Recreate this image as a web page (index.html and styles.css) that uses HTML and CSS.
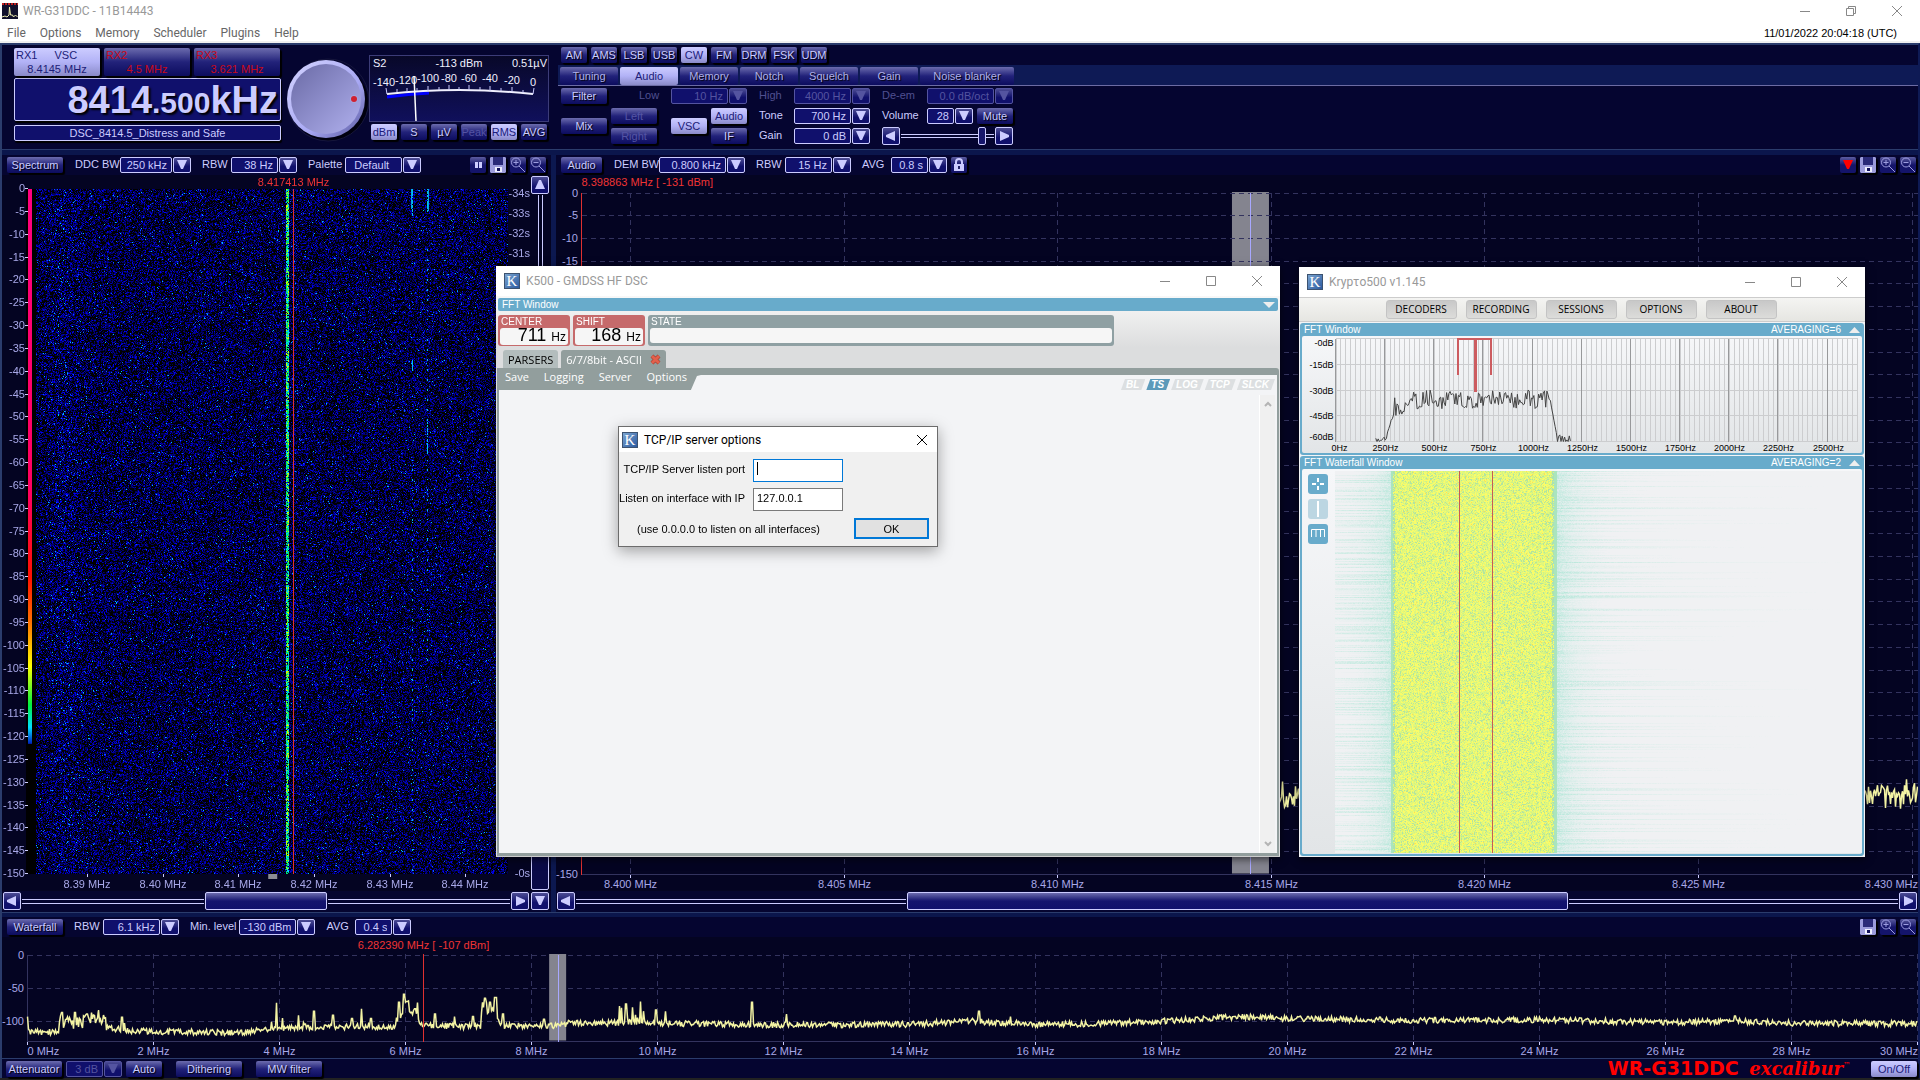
FILE: index.html
```html
<!DOCTYPE html>
<html lang="en">
<head>
  <meta charset="UTF-8">
  <title>WR-G31DDC - 11B14443</title>
  <meta name="viewport" content="width=device-width, initial-scale=1.0">
  <link rel="stylesheet" href="styles.css">
</head>
<body>

<!-- icons -->
<svg class="sprite" aria-hidden="true">
  <symbol id="i-down" viewBox="0 0 10 10"><path d="M0 0h10L6 9H4z"/></symbol>
  <symbol id="i-up" viewBox="0 0 10 10"><path d="M4 0h2l4 9H0z"/></symbol>
  <symbol id="i-left" viewBox="0 0 10 10"><path d="M9 0v10L0 6V4z"/></symbol>
  <symbol id="i-right" viewBox="0 0 10 10"><path d="M1 0v10l9-4V4z"/></symbol>
  <symbol id="i-pause" viewBox="0 0 16 16"><path d="M5 5h3v6H5zM9 5h3v6H9z"/></symbol>
  <symbol id="i-save" viewBox="0 0 16 16"><path d="M0 1l1-1h14l1 1v14l-1 1H1l-1-1z" fill="#9c9cdc"/><path d="M3 0h10v8H3z" fill="#2a2a78"/><path d="M5 10h7v5H5z" fill="#eeeeff"/><path d="M7 11h3v3H7z" fill="#10105a"/></symbol>
  <symbol id="i-zoomin" viewBox="0 0 16 16"><g fill="none" stroke="#9c9ce0"><circle cx="6" cy="5.500" r="4.500"/><path d="M9 9l6 6M3.500 5.500h5M6 3v5"/></g></symbol>
  <symbol id="i-zoomout" viewBox="0 0 16 16"><g fill="none" stroke="#9c9ce0"><circle cx="6" cy="5.500" r="4.500"/><path d="M9 9l6 6M3.500 5.500h5"/></g></symbol>
  <symbol id="i-lock" viewBox="0 0 16 16"><path d="M5 7V5q0-3 3-3t3 3v2" fill="none" stroke="#ccf" stroke-width="2"/><path d="M3 7h10v7H3z" fill="#ccf"/><path d="M7 9h2v3H7z" fill="#226"/></symbol>
  <symbol id="i-min" viewBox="0 0 10 10"><path d="M0 5.500h10"/></symbol>
  <symbol id="i-max" viewBox="0 0 10 10"><path d="M.5.5h9v9h-9z"/></symbol>
  <symbol id="i-restore" viewBox="0 0 10 10"><path d="M.5 2.500h7v7h-7zM2.500 2.500v-2h7v7h-2"/></symbol>
  <symbol id="i-close" viewBox="0 0 10 10"><path d="M0 0l10 10M10 0L0 10"/></symbol>
</svg>

<div class="app">
  <header class="titlebar">
    <svg class="app-icon" width="16" height="16" viewBox="0 0 16 16"><path d="M0 0h16v16H0z" fill="#10102c"/><path d="M0 1h16" stroke="#c02020" stroke-width="2" stroke-dasharray="2 1"/><path d="M0 14l3-1 2 1 2-2 .5-8 1 8 2 0 1 2 2-2 2 2" fill="none" stroke="#f0f0b0"/></svg>
    <span class="title">WR-G31DDC - 11B14443</span>
    <div class="win-buttons">
      <button aria-label="Minimize"><svg width="10" height="10"><use href="#i-min"/></svg></button>
      <button aria-label="Restore"><svg width="10" height="10"><use href="#i-restore"/></svg></button>
      <button aria-label="Close"><svg width="10" height="10"><use href="#i-close"/></svg></button>
    </div>
  </header>
  <nav class="menubar">
    <a href="#">File</a><a href="#">Options</a><a href="#">Memory</a><a href="#">Scheduler</a><a href="#">Plugins</a><a href="#">Help</a>
    <span class="clock">11/01/2022 20:04:18 (UTC)</span>
  </nav>

  <main class="radio">
    <section class="top">
      <div class="tuner">
        <div class="rx-tabs">
          <button class="rx on"><span>RX1 <i>VSC</i></span><b>8.4145 MHz</b></button>
          <button class="rx"><span>RX2</span><b>4.5 MHz</b></button>
          <button class="rx"><span>RX3</span><b>3.621 MHz</b></button>
        </div>
        <div class="freq">8414<small>.500</small>kHz</div>
        <div class="station">DSC_8414.5_Distress and Safe</div>
      </div>
      <svg class="knob" width="82" height="84" viewBox="0 0 82 84">
        <defs>
          <linearGradient id="kf" x1="0" y1="0" x2="1" y2="1"><stop offset="0" stop-color="#6a6aa6"/><stop offset="1" stop-color="#b0b0ee"/></linearGradient>
          <linearGradient id="kr" x1="0" y1="0" x2="1" y2="1"><stop offset="0" stop-color="#d4d4ff"/><stop offset=".6" stop-color="#a8a8f4"/><stop offset="1" stop-color="#54549a"/></linearGradient>
        </defs>
        <circle cx="42" cy="44" r="39" fill="#00000f"/>
        <circle cx="41" cy="42" r="41" fill="none" stroke="#16163c"/>
        <circle cx="39" cy="41" r="39" fill="url(#kr)"/>
        <circle cx="39" cy="41" r="35" fill="url(#kf)"/>
        <circle cx="67" cy="41" r="4" fill="#a4a4dc"/>
        <circle cx="67" cy="41" r="3" fill="#d02030"/>
      </svg>
      <div class="meter">
        <svg width="180" height="67" viewBox="0 0 180 67">
          <g class="m-text">
            <text x="4" y="12">S2</text><text x="90" y="12" text-anchor="middle">-113 dBm</text><text x="178" y="12" text-anchor="end">0.51µV</text>
            <g text-anchor="middle"><text x="15" y="31">-140</text><text x="37" y="29">-120</text><text x="59" y="27">-100</text><text x="80" y="27">-80</text><text x="100" y="27">-60</text><text x="121" y="27">-40</text><text x="143" y="29">-20</text><text x="164" y="31">0</text></g>
          </g>
          <path d="M18 42Q40 39 60 38" stroke="#0000ff" stroke-width="3" fill="none"/>
          <path d="M18 39Q90 31 164 39" stroke="#f0f0ff" stroke-width="2" fill="none"/>
          <path d="M18 39l-1-6M38 37v-4M59 36v-5M80 35v-5M100 35v-5M121 36v-5M143 37v-5M164 39l1-6M28 37v-3M48 36v-3M70 35v-3M90 35v-3M111 35v-3M132 36v-3M154 38v-3" stroke="#ccf"/>
          <path d="M45 21l2 45" stroke="#fff" stroke-width="1.500"/>
        </svg>
        <div class="meter-buttons">
          <button class="btn on">dBm</button><button class="btn">S</button><button class="btn">µV</button><button class="btn off">Peak</button><button class="btn on">RMS</button><button class="btn">AVG</button>
        </div>
      </div>
      <div class="demod">
        <div class="modes">
          <button class="btn">AM</button><button class="btn">AMS</button><button class="btn">LSB</button><button class="btn">USB</button><button class="btn on">CW</button><button class="btn">FM</button><button class="btn">DRM</button><button class="btn">FSK</button><button class="btn">UDM</button>
        </div>
        <div class="tabs">
          <button class="tab">Tuning</button><button class="tab on">Audio</button><button class="tab">Memory</button><button class="tab">Notch</button><button class="tab">Squelch</button><button class="tab">Gain</button><button class="tab wide">Noise blanker</button>
        </div>
        <div class="controls">
          <div class="stack s46">
            <button class="btn">Filter</button>
            <button class="btn low">Mix</button>
          </div>
          <div class="stack s46">
            <span class="blank"></span>
            <button class="btn off">Left</button>
            <button class="btn off">Right</button>
          </div>
          <div class="low-group">
            <div class="ctl off"><label for="low">Low</label><span class="combo w57"><select id="low" disabled><option>10 Hz</option></select><span class="arrow"><svg width="10" height="10"><use href="#i-down"/></svg></span></span></div>
            <div class="src">
              <button class="btn on vsc">VSC</button>
              <div class="stack s36"><button class="btn on">Audio</button><button class="btn">IF</button></div>
            </div>
          </div>
          <div class="stack c-high">
            <div class="ctl off"><label for="high">High</label><span class="combo w57"><select id="high" disabled><option>4000 Hz</option></select><span class="arrow"><svg width="10" height="10"><use href="#i-down"/></svg></span></span></div>
            <div class="ctl"><label for="tone">Tone</label><span class="combo w57"><select id="tone"><option>700 Hz</option></select><span class="arrow"><svg width="10" height="10"><use href="#i-down"/></svg></span></span></div>
            <div class="ctl"><label for="gain">Gain</label><span class="combo w57"><select id="gain"><option>0 dB</option></select><span class="arrow"><svg width="10" height="10"><use href="#i-down"/></svg></span></span></div>
          </div>
          <div class="stack c-vol">
            <div class="ctl off"><label for="deem">De-em</label><span class="combo w67"><select id="deem" disabled><option>0.0 dB/oct</option></select><span class="arrow"><svg width="10" height="10"><use href="#i-down"/></svg></span></span></div>
            <div class="ctl"><label for="vol">Volume</label><span class="combo w27"><select id="vol"><option>28</option></select><span class="arrow"><svg width="10" height="10"><use href="#i-down"/></svg></span></span><button class="btn mute">Mute</button></div>
            <div class="slider">
              <button class="sq" aria-label="Volume down"><svg width="10" height="10"><use href="#i-left"/></svg></button>
              <input type="range" min="0" max="31" value="28" aria-label="Volume">
              <button class="sq" aria-label="Volume up"><svg width="10" height="10"><use href="#i-right"/></svg></button>
            </div>
          </div>
        </div>
      </div>
    </section>

    <section class="middle">
      <div class="panel spectrum">
        <div class="toolbar">
          <button class="btn b56">Spectrum</button>
          <label for="ddc" class="l42">DDC BW</label><span class="combo w52"><select id="ddc"><option>250 kHz</option></select><span class="arrow"><svg width="10" height="10"><use href="#i-down"/></svg></span></span>
          <label for="rbw1">RBW</label><span class="combo w47"><select id="rbw1"><option>38 Hz</option></select><span class="arrow"><svg width="10" height="10"><use href="#i-down"/></svg></span></span>
          <label for="pal">Palette</label><span class="combo w57 mid"><select id="pal"><option>Default</option></select><span class="arrow"><svg width="10" height="10"><use href="#i-down"/></svg></span></span>
          <div class="tools">
            <button class="icon" aria-label="Pause"><svg width="16" height="16"><use href="#i-pause"/></svg></button>
            <button class="icon" aria-label="Save"><svg width="16" height="16"><use href="#i-save"/></svg></button>
            <button class="icon" aria-label="Zoom in"><svg width="16" height="16"><use href="#i-zoomin"/></svg></button>
            <button class="icon" aria-label="Zoom out"><svg width="16" height="16"><use href="#i-zoomout"/></svg></button>
          </div>
        </div>
        <div class="spec-body">
          <div class="plot" id="spectrum"><canvas></canvas><svg></svg></div>
          <div class="vscroll">
            <button class="sq" aria-label="Scroll up"><svg width="10" height="10"><use href="#i-up"/></svg></button>
            <span class="vtrack"></span><span class="vthumb"></span>
          </div>
        </div>
        <div class="hscroll">
          <button class="sq" aria-label="Scroll left"><svg width="10" height="10"><use href="#i-left"/></svg></button>
          <span class="track"></span><span class="thumb small"></span><span class="track"></span>
          <button class="sq" aria-label="Scroll right"><svg width="10" height="10"><use href="#i-right"/></svg></button>
          <button class="sq" aria-label="Scroll down"><svg width="10" height="10"><use href="#i-down"/></svg></button>
        </div>
      </div>
      <div class="panel audio">
        <div class="toolbar">
          <button class="btn b41">Audio</button>
          <label for="dem" class="l42">DEM BW</label><span class="combo w67"><select id="dem"><option>0.800 kHz</option></select><span class="arrow"><svg width="10" height="10"><use href="#i-down"/></svg></span></span>
          <label for="rbw2">RBW</label><span class="combo w47"><select id="rbw2"><option>15 Hz</option></select><span class="arrow"><svg width="10" height="10"><use href="#i-down"/></svg></span></span>
          <label for="avg2">AVG</label><span class="combo w37"><select id="avg2"><option>0.8 s</option></select><span class="arrow"><svg width="10" height="10"><use href="#i-down"/></svg></span></span>
          <button class="icon lock" aria-label="Lock"><svg width="16" height="16"><use href="#i-lock"/></svg></button>
          <div class="tools">
            <button class="icon red" aria-label="Marker"><svg width="10" height="10"><use href="#i-down"/></svg></button>
            <button class="icon" aria-label="Save"><svg width="16" height="16"><use href="#i-save"/></svg></button>
            <button class="icon" aria-label="Zoom in"><svg width="16" height="16"><use href="#i-zoomin"/></svg></button>
            <button class="icon" aria-label="Zoom out"><svg width="16" height="16"><use href="#i-zoomout"/></svg></button>
          </div>
        </div>
        <div class="plot" id="audio"><svg></svg></div>
        <div class="hscroll">
          <button class="sq" aria-label="Scroll left"><svg width="10" height="10"><use href="#i-left"/></svg></button>
          <span class="track"></span><span class="thumb big"></span><span class="track"></span>
          <button class="sq" aria-label="Scroll right"><svg width="10" height="10"><use href="#i-right"/></svg></button>
        </div>
      </div>
    </section>

    <section class="panel wide-band">
      <div class="toolbar">
        <button class="btn b56">Waterfall</button>
        <label for="rbw3">RBW</label><span class="combo w57"><select id="rbw3"><option>6.1 kHz</option></select><span class="arrow"><svg width="10" height="10"><use href="#i-down"/></svg></span></span>
        <label for="minl">Min. level</label><span class="combo w57"><select id="minl"><option>-130 dBm</option></select><span class="arrow"><svg width="10" height="10"><use href="#i-down"/></svg></span></span>
        <label for="avg3">AVG</label><span class="combo w37"><select id="avg3"><option>0.4 s</option></select><span class="arrow"><svg width="10" height="10"><use href="#i-down"/></svg></span></span>
        <div class="tools">
          <button class="icon" aria-label="Save"><svg width="16" height="16"><use href="#i-save"/></svg></button>
          <button class="icon" aria-label="Zoom in"><svg width="16" height="16"><use href="#i-zoomin"/></svg></button>
          <button class="icon" aria-label="Zoom out"><svg width="16" height="16"><use href="#i-zoomout"/></svg></button>
        </div>
      </div>
      <div class="plot" id="band"><svg></svg></div>
    </section>

    <footer class="bottom">
      <button class="btn b56">Attenuator</button>
      <span class="combo w37 off"><select aria-label="Attenuator" disabled><option>3 dB</option></select><span class="arrow"><svg width="10" height="10"><use href="#i-down"/></svg></span></span>
      <button class="btn b36">Auto</button>
      <button class="btn b66">Dithering</button>
      <button class="btn b66">MW filter</button>
      <span class="brand">WR-G31DDC <em>excalibur</em><sup>™</sup></span>
      <button class="btn on b46">On/Off</button>
    </footer>
  </main>
</div>

<!-- decoder window -->
<section class="window k500">
  <header class="win-title">
    <span class="k-icon">K</span><span>K500 - GMDSS HF DSC</span>
    <div class="win-buttons">
      <button aria-label="Minimize"><svg width="10" height="10"><use href="#i-min"/></svg></button>
      <button aria-label="Maximize"><svg width="10" height="10"><use href="#i-max"/></svg></button>
      <button aria-label="Close"><svg width="10" height="10"><use href="#i-close"/></svg></button>
    </div>
  </header>
  <div class="blue-bar">FFT Window <svg width="12" height="6" viewBox="0 0 12 6"><path d="M0 0h12L6 6z"/></svg></div>
  <div class="fields">
    <div class="field red"><span>CENTER</span><p>711 <small>Hz</small></p></div>
    <div class="field red"><span>SHIFT</span><p>168 <small>Hz</small></p></div>
    <div class="field state"><span>STATE</span><p></p></div>
  </div>
  <div class="k-tabs">
    <button class="k-tab">PARSERS</button>
    <button class="k-tab on">6/7/8bit - ASCII <svg width="11" height="11" viewBox="0 0 11 11"><path d="M2 2l7 7M9 2L2 9" stroke="#a03a2c" stroke-width="4"/><path d="M2 2l7 7M9 2L2 9" stroke="#e2604c" stroke-width="3"/></svg></button>
  </div>
  <div class="k-frame">
    <div class="k-head">
      <nav class="k-menu"><a href="#">Save</a><a href="#">Logging</a><a href="#">Server</a><a href="#">Options</a></nav>
      <div class="flags"><span>BL</span><span class="on">TS</span><span>LOG</span><span>TCP</span><span>SLCK</span></div>
    </div>
    <div class="k-scroll">
      <svg width="8" height="6" viewBox="0 0 8 6"><path d="M1 5l3-3 3 3"/></svg>
      <svg width="8" height="6" viewBox="0 0 8 6"><path d="M1 1l3 3 3-3"/></svg>
    </div>
  </div>
</section>

<!-- main decoder control window -->
<section class="window krypto">
  <header class="win-title">
    <span class="k-icon">K</span><span>Krypτo500 v1.145</span>
    <div class="win-buttons">
      <button aria-label="Minimize"><svg width="10" height="10"><use href="#i-min"/></svg></button>
      <button aria-label="Maximize"><svg width="10" height="10"><use href="#i-max"/></svg></button>
      <button aria-label="Close"><svg width="10" height="10"><use href="#i-close"/></svg></button>
    </div>
  </header>
  <div class="kr-menu">
    <button>DECODERS</button><button>RECORDING</button><button>SESSIONS</button><button>OPTIONS</button><button>ABOUT</button>
  </div>
  <div class="kr-panel fft">
    <div class="kr-head">FFT Window <span>AVERAGING=6</span><svg width="11" height="6" viewBox="0 0 11 6"><path d="M0 6h11L5.500 0z"/></svg></div>
    <div class="kr-body" id="fft"><svg></svg></div>
  </div>
  <div class="kr-panel fall">
    <div class="kr-head">FFT Waterfall Window <span>AVERAGING=2</span><svg width="11" height="6" viewBox="0 0 11 6"><path d="M0 6h11L5.500 0z"/></svg></div>
    <div class="kr-body">
      <div class="kr-tools">
        <button aria-label="Cross cursor"><svg width="14" height="14" viewBox="0 0 14 14"><path d="M7 1v4M7 9v4M1 7h4M9 7h4" stroke-width="2"/></svg></button>
        <button class="dim" aria-label="Line cursor"><svg width="14" height="16" viewBox="0 0 14 16"><path d="M7 0v16" stroke-width="2"/></svg></button>
        <button aria-label="Comb cursor"><svg width="14" height="14" viewBox="0 0 14 14"><path d="M.5 10V2.500h13V10M5 2v8M9.500 2v8"/></svg></button>
      </div>
      <div class="kr-fall" id="fall"><canvas></canvas></div>
    </div>
  </div>
</section>

<!-- server options dialog -->
<form class="window dialog">
  <header class="win-title">
    <span class="k-icon">K</span><span>TCP/IP server options</span>
    <div class="win-buttons"><button type="button" aria-label="Close"><svg width="10" height="10"><use href="#i-close"/></svg></button></div>
  </header>
  <div class="form-row"><label for="port">TCP/IP Server listen port</label><input type="text" id="port" class="active"></div>
  <div class="form-row"><label for="ip">Listen on interface with IP</label><input type="text" id="ip" value="127.0.0.1"></div>
  <div class="form-foot"><span>(use 0.0.0.0 to listen on all interfaces)</span><button type="button">OK</button></div>
</form>

<script src="script.js"></script>
</body>
</html>
```
FILE: styles.css
```css
* {
  margin: 0;
  padding: 0;
  box-sizing: border-box;
}

body {
  font-family: "Liberation Sans", Arial, sans-serif;
  font-size: 11px;
  line-height: 14px;
  color: #ccccff;
  background: #222;
  overflow: hidden;
}

button, select, input {
  font: inherit;
  color: inherit;
  border: 0;
  background: none;
}

a {
  color: inherit;
  text-decoration: none;
}

svg { display: block; }

.sprite { display: none; }

.app {
  min-height: 100vh;
  display: flex;
  flex-direction: column;
  padding-bottom: 2px;
}

/* title + menu */
.titlebar {
  display: flex;
  align-items: center;
  height: 22px;
  padding-left: 2px;
  background: #fff;
  color: #999;
  font-family: Roboto, "Noto Sans", sans-serif;
  font-size: 12px;
}

.titlebar .title { margin-left: 5px; }

.win-buttons {
  display: flex;
  margin-left: auto;
}

.win-buttons button {
  width: 46px;
  height: 20px;
  display: flex;
  align-items: center;
  justify-content: center;
}

.win-buttons svg {
  fill: none;
  stroke: #888;
}

.menubar {
  display: flex;
  align-items: center;
  gap: 14px;
  height: 21px;
  padding: 2px 23px 0 7px;
  background: #fff;
  border-bottom: 2px solid #f0f0f0;
  color: #666;
  font-family: Roboto, "Noto Sans", sans-serif;
  font-size: 12px;
}

.clock {
  margin-left: auto;
  color: #000;
  font-family: "Liberation Sans", Arial, sans-serif;
  font-size: 11px;
}

/* receiver */
.radio {
  flex: 1;
  display: flex;
  flex-direction: column;
  background: #050530;
  border-top: 2px solid #2b3c6c;
  border-left: 2px solid #2b3c6c;
  border-right: 2px solid #0e1a55;
}

.btn, .tab, .rx {
  background: linear-gradient(#6c6cae, #22227a 50%, #0c0c5e);
  border-radius: 2px;
  box-shadow: 2px 2px 1px #000;
  text-shadow: 1px 1px 1px #000;
  white-space: nowrap;
}

.btn {
  height: 16px;
  line-height: 16px;
  text-align: center;
}

.btn.on, .tab.on, .rx.on {
  background: linear-gradient(#ccccff, #b2b2f6 50%, #8a8ac8);
  color: #1c1c78;
  text-shadow: none;
}

.btn.off {
  color: #5454a4;
  text-shadow: none;
}

.b36 { width: 36px; }
.b41 { width: 41px; }
.b46 { width: 46px; }
.b56 { width: 56px; }
.b66 { width: 66px; }

.top {
  display: flex;
  height: 110px;
  border-bottom: 5px solid #0b164c;
  box-shadow: inset 0 -1px #2b3c6c;
}

.tuner {
  width: 267px;
  margin: 3px 6px 0 12px;
}

.rx-tabs {
  display: flex;
  gap: 4px;
}

.rx {
  width: 86px;
  height: 28px;
  padding: 0 2px;
  line-height: 14px;
  color: #c80818;
  text-shadow: none;
}

.rx span, .rx b {
  display: block;
  font-weight: normal;
  text-align: left;
}

.rx b { text-align: center; }

.rx i {
  font-style: normal;
  margin-left: 14px;
}

.freq, .station {
  border: 1px solid #ccccff;
  border-radius: 2px;
  background: #10106c;
  box-shadow: 1px 2px 1px #000;
}

.freq {
  margin-top: 2px;
  height: 43px;
  padding-right: 2px;
  text-align: right;
  font-size: 38px;
  line-height: 43px;
  font-weight: bold;
  text-shadow: 2px 2px 2px #000;
}

.freq small { font-size: 30px; }

.station {
  margin-top: 4px;
  height: 16px;
  line-height: 15px;
  text-align: center;
}

.knob { margin-top: 13px; }

.meter { margin-top: 10px; }

.meter > svg {
  background: linear-gradient(#080828, #10105c);
  outline: 1px solid #3c3c78;
  outline-offset: -1px;
}

.m-text {
  font-size: 11px;
  fill: #f0f0ff;
}

.meter-buttons {
  display: flex;
  gap: 4px;
  margin: 2px 0 0 2px;
}

.meter-buttons .btn, .modes .btn { width: 26px; }

.demod {
  flex: 1;
  margin-left: 9px;
}

.modes {
  display: flex;
  gap: 4px;
  height: 20px;
  padding: 2px 0 0 3px;
}

.tabs {
  display: flex;
  gap: 2px;
  height: 21px;
  padding: 2px 0 0 2px;
  background: #0e1a55;
  border-bottom: 1px solid #6c6ca4;
}

.tab {
  width: 58px;
  height: 18px;
  line-height: 17px;
  box-shadow: none;
  color: #b0b0e8;
}

.tab.wide { width: 94px; }

.controls {
  display: flex;
  padding: 2px 0 0 3px;
}

.stack {
  display: flex;
  flex-direction: column;
  gap: 4px;
  margin-right: 4px;
}

.s46 { width: 46px; }
.s36 { width: 36px; }

.stack .low { margin-top: 10px; }

.blank { height: 16px; }

.low-group {
  width: 86px;
  margin-right: 12px;
}

.low-group .ctl { justify-content: flex-end; }

.low-group .ctl label {
  flex: none;
  width: 32px;
}

.low-group .combo { flex: none; }

.src {
  display: flex;
  justify-content: flex-end;
  gap: 4px;
  margin-top: 4px;
}

.src .stack { margin: 0; }

.vsc {
  width: 36px;
  margin-top: 10px;
}

.ctl {
  display: flex;
  height: 16px;
}

.c-high { margin-right: 12px; }

.c-high label { width: 35px; }

.c-vol label { width: 45px; }

.ctl.off label { color: #505090; }

.combo {
  display: flex;
  gap: 1px;
  height: 16px;
}

.combo select {
  flex: 1;
  min-width: 0;
  height: 16px;
  padding-right: 4px;
  border: 1px solid #ccccff;
  border-radius: 2px;
  background: #10106c;
  text-align: right;
  text-align-last: right;
  appearance: none;
  opacity: 1;
}

.combo.mid select {
  text-align: center;
  text-align-last: center;
}

.w27 { width: 46px; }
.w37 { width: 56px; }
.w47 { width: 66px; }
.w52 { width: 71px; }
.w57 { width: 76px; }
.w67 { width: 86px; }

.arrow, .sq {
  display: flex;
  align-items: center;
  justify-content: center;
  width: 18px;
  border: 1px solid #ccccff;
  border-radius: 2px;
  background: linear-gradient(#4c4c94, #10106c 60%);
  fill: #ccccff;
}

.off .combo select, .combo.off select, .off .arrow {
  border-color: #5454a0;
  color: #5454a0;
  fill: #5454a0;
}

.sq {
  flex: none;
  height: 18px;
}

.mute {
  width: 36px;
  margin-left: 4px;
}

.slider {
  display: flex;
  align-items: center;
  width: 131px;
  height: 18px;
  margin-top: -1px;
}

.slider input {
  flex: 1;
  min-width: 0;
  margin: 0 1px;
  height: 18px;
  appearance: none;
}

.slider input::-webkit-slider-runnable-track {
  height: 4px;
  border: 1px solid #ccccff;
  border-width: 1px 0;
}

.slider input::-webkit-slider-thumb {
  appearance: none;
  width: 8px;
  height: 18px;
  margin-top: -8px;
  border: 1px solid #ccccff;
  border-radius: 2px;
  background: #16166c;
}

/* plots */
.middle {
  flex: 1;
  display: flex;
  min-height: 0;
}

.panel {
  display: flex;
  flex-direction: column;
  min-width: 0;
}

.spectrum {
  flex: 0 0 554px;
  border-right: 5px solid #0c1850;
}

.audio { flex: 1; }

.toolbar {
  display: flex;
  align-items: center;
  height: 20px;
  padding: 0 2px 0 5px;
}

.toolbar label {
  min-width: 26px;
  margin: 0 3px 2px 11px;
  white-space: nowrap;
}

.toolbar .l42 {
  width: 42px;
  margin-left: 12px;
}

.tools {
  display: flex;
  gap: 4px;
  margin-left: auto;
}

.icon {
  display: flex;
  align-items: center;
  justify-content: center;
  width: 16px;
  height: 16px;
  border-radius: 2px;
  background: linear-gradient(#5c5ca0, #14146a 50%);
  box-shadow: 2px 2px 1px #000;
  fill: #ccccff;
}

.icon.red { fill: #f00; }

.lock { margin-left: 4px; }

.spectrum .tools { margin-right: 3px; }

.spec-body {
  flex: 1;
  display: flex;
  min-height: 0;
  background: #040422;
}

.plot {
  flex: 1;
  position: relative;
  min-width: 0;
  min-height: 0;
  overflow: hidden;
  background: #040422;
}

.plot canvas {
  display: block;
  margin: 14px 0 0 34px;
}

.plot svg {
  position: absolute;
  inset: 0;
  width: 100%;
  height: 100%;
}

.plot text {
  fill: #a8a8e8;
  font-size: 11px;
}

.plot text.hot { fill: #f03434; }

.grid {
  stroke: #33335e;
  stroke-dasharray: 5 4;
  shape-rendering: crispEdges;
}

.axis {
  stroke: #33335e;
  fill: none;
  shape-rendering: crispEdges;
}

.tick { stroke: #ccccff; shape-rendering: crispEdges; }
.hot-line { stroke: #e03030; shape-rendering: crispEdges; }
.mark { fill: #84848f; }
.mark-line { stroke: #a8a8ff; shape-rendering: crispEdges; }
.trace { fill: none; stroke: #f4f4a4; stroke-width: 1.5; }

.vscroll {
  display: flex;
  flex-direction: column;
  align-items: center;
  width: 20px;
  padding: 1px 2px 1px 0;
}

.vtrack {
  flex: 1;
  width: 5px;
  margin: 1px 0;
  border: 1px solid #ccccff;
  border-width: 0 1px;
}

.vthumb {
  flex: 1;
  width: 18px;
  border: 1px solid #ccccff;
  border-radius: 2px;
  background: #0a0a48;
}

.hscroll {
  display: flex;
  align-items: center;
  height: 21px;
  padding: 0 2px 1px 1px;
}

.audio .hscroll { padding-right: 1px; }

.hscroll .sq + .sq { margin-left: 2px; }

.track {
  flex: 183;
  height: 5px;
  margin: 0 1px;
  border: 1px solid #ccccff;
  border-width: 1px 0;
}

.thumb {
  height: 18px;
  border: 1px solid #ccccff;
  border-radius: 2px;
  background: linear-gradient(#6c6cae, #14146e 50%, #10106c);
}

.thumb.small { flex: 120; }
.thumb.big { flex: 366; }

.wide-band {
  border-top: 1px solid #2b3c6c;
  box-shadow: inset 0 4px #0b164c;
  padding-top: 4px;
}

#band {
  flex: none;
  height: 121px;
}

.bottom {
  display: flex;
  align-items: center;
  gap: 4px;
  height: 20px;
  padding: 0 1px 0 4px;
  border-top: 1px solid #2b3c6c;
}

.bottom .b66 { margin-left: 10px; }

.brand {
  margin: 0 16px 0 auto;
  color: #f00;
  font: bold 19px/18px "DejaVu Sans", sans-serif;
  white-space: nowrap;
}

.brand em {
  margin-left: 4px;
  font-family: "DejaVu Serif", serif;
  font-size: 18px;
}

.brand sup {
  font-size: 8px;
  line-height: 8px;
  font-weight: normal;
}

/* floating windows */
.window {
  position: absolute;
  display: flex;
  flex-direction: column;
  color: #000;
  background: #f3f4f6;
  box-shadow: 0 2px 8px rgba(0, 0, 0, .6);
}

.win-title {
  flex: none;
  display: flex;
  align-items: center;
  gap: 6px;
  height: 30px;
  padding-left: 8px;
  background: #fff;
  color: #999;
  font-family: Roboto, "Noto Sans", sans-serif;
  font-size: 12px;
}

.k-icon {
  width: 16px;
  height: 16px;
  border: 1px solid #3c5270;
  background: linear-gradient(135deg, #7aa4d0, #2c5aa0);
  color: #fff;
  font: 15px/14px "Liberation Serif", serif;
  text-align: center;
}

.k500 {
  left: 496px;
  top: 266px;
  width: 784px;
  height: 591px;
  border-bottom: 1px solid #ccc;
  background: linear-gradient(#f8f8f8 30px, #dcddde 82px);
}

.blue-bar {
  display: flex;
  align-items: center;
  justify-content: space-between;
  height: 13px;
  margin: 2px 2px 0;
  padding: 0 3px 0 4px;
  border-radius: 2px;
  background: #68abcb;
  color: #fff;
  font-size: 10px;
}

.blue-bar svg, .kr-head svg { fill: #eee; }

.fields {
  display: flex;
  gap: 3px;
  margin: 4px 0 0 2px;
}

.field {
  display: flex;
  flex-direction: column;
  height: 31px;
  padding: 0 2px 3px;
  border-radius: 3px;
  color: #fff;
  font-size: 10px;
  line-height: 13px;
}

.field.red {
  width: 72px;
  background: #c66a6b;
}

.field.state {
  width: 466px;
  background: #8fa0a3;
}

.field span { padding-left: 1px; }

.field p {
  flex: 1;
  padding-right: 2px;
  border-radius: 3px;
  background: #f6f6f6;
  color: #000;
  text-align: right;
  font-size: 18px;
  line-height: 15px;
}

.field small { font-size: 12px; }

.k-tabs {
  display: flex;
  gap: 3px;
  margin: 4px 0 0 7px;
}

.k-tab {
  display: flex;
  align-items: center;
  gap: 8px;
  height: 18px;
  padding: 0 5px;
  border-radius: 3px 3px 0 0;
  background: #b3bdbd;
  font: 11px/19px "Open Sans", sans-serif;
}

.k-tab.on {
  background: #929e9d;
  color: #fff;
}

.k-frame {
  flex: 1;
  display: flex;
  flex-direction: column;
  margin: 0 1px;
  border: solid #929e9d;
  border-width: 7px 2px 3px;
  border-radius: 0 3px 0 0;
  background: #f3f4f6;
}

.k-head {
  display: flex;
  justify-content: space-between;
}

.k-menu {
  display: flex;
  gap: 15px;
  width: 202px;
  height: 22px;
  margin-top: -7px;
  padding: 1px 0 0 6px;
  background: #929e9d;
  color: #fff;
  font: 11px/16px "Open Sans", sans-serif;
  clip-path: polygon(0 0, 100% 0, 100% 7px, 98% 8px, 95% 100%, 0 100%);
}

.flags {
  display: flex;
  gap: 1px;
  margin: 4px 2px 0 0;
}

.flags span {
  height: 11px;
  padding: 0 6px 0 5px;
  background: #dcdfe1;
  color: #fff;
  font: italic bold 10px/11px "Liberation Sans", sans-serif;
  clip-path: polygon(4px 0, 100% 0, calc(100% - 4px) 100%, 0 100%);
}

.flags .on { background: #5c9aba; }

.k-scroll {
  flex: 1;
  display: flex;
  flex-direction: column;
  justify-content: space-between;
  align-items: center;
  width: 16px;
  margin: 5px 2px 0 auto;
  padding: 6px 0;
  background: #f0f0f0;
  border-left: 1px solid #fff;
}

.k-scroll svg {
  fill: none;
  stroke: #b4b4b4;
  stroke-width: 2;
}

.krypto {
  left: 1299px;
  top: 267px;
  width: 566px;
  height: 590px;
  padding-bottom: 1px;
}

.kr-menu {
  display: flex;
  justify-content: center;
  gap: 9px;
  height: 25px;
  padding: 2px 2px 0 0;
  border-top: 1px solid #ccc;
  border-bottom: 1px solid #ccc;
  background: linear-gradient(#f4f4f2, #e6e6e2);
}

.kr-menu button {
  width: 71px;
  height: 19px;
  border: 1px solid #c4c4c4;
  border-radius: 3px;
  background: linear-gradient(#c8c8c8, #dcdcda);
  font: 10px/17px "Open Sans", sans-serif;
}

.kr-panel {
  display: flex;
  flex-direction: column;
  margin: 1px 1px 0;
  padding: 0 2px 2px;
  border-radius: 3px;
  background: #68abcb;
}

.fft { height: 132px; }

.fall { flex: 1; }

.kr-head {
  display: flex;
  align-items: center;
  gap: 8px;
  height: 13px;
  padding: 0 2px;
  color: #fff;
  font-size: 10px;
}

.kr-head span { margin-left: auto; }

.kr-body {
  flex: 1;
  display: flex;
  min-height: 0;
  border-radius: 2px;
  background: linear-gradient(#f6f7f9, #e2e5e7);
  overflow: hidden;
}

.kr-body > svg {
  width: 100%;
  height: 100%;
}

.kr-body text {
  font-size: 9px;
  fill: #000;
}

.minor { stroke: #cccdcf; shape-rendering: crispEdges; }
.major { stroke: #98999b; shape-rendering: crispEdges; }
.cursor { stroke: #cc5c60; fill: none; shape-rendering: crispEdges; }
.fft-trace { stroke: #444; fill: none; }

.kr-tools {
  display: flex;
  flex-direction: column;
  gap: 5px;
  padding: 5px 7px 0 6px;
}

.kr-tools button {
  display: flex;
  align-items: center;
  justify-content: center;
  width: 20px;
  height: 20px;
  border-radius: 3px;
  background: #68abcb;
}

.kr-tools svg {
  fill: none;
  stroke: #fff;
}

.kr-tools .dim { background: #bcd6e2; }

.kr-fall {
  flex: 1;
  min-width: 0;
  margin: 2px 0 1px;
  overflow: hidden;
}

.kr-fall canvas { display: block; }

.dialog {
  left: 618px;
  top: 426px;
  width: 320px;
  height: 121px;
  border: 1px solid #6c6c6c;
  background: #f0f0f0;
  box-shadow: 0 4px 14px rgba(0, 0, 0, .35);
}

.dialog .win-title {
  height: 25px;
  padding-left: 3px;
  color: #000;
}

.dialog .win-buttons button { width: 30px; }

.dialog .win-buttons svg { stroke: #000; }

.form-row {
  display: flex;
  margin-top: 7px;
}

.form-row + .form-row { margin-top: 6px; }

.form-row label {
  width: 126px;
  margin-right: 8px;
  text-align: right;
  line-height: 20px;
  white-space: nowrap;
}

.form-row input {
  width: 90px;
  height: 23px;
  padding: 0 3px 3px;
  border: 1px solid #7a7a7a;
  background: #fff;
}

.form-row .active {
  border-color: #0078d7;
  background: linear-gradient(#000, #000) 3px 2px / 1px 13px no-repeat #fff;
}

.form-foot {
  display: flex;
  justify-content: space-between;
  align-items: center;
  margin: 7px 8px 0 18px;
}

.form-foot button {
  width: 75px;
  height: 21px;
  border: 2px solid #0078d7;
  background: #e1e1e1;
}
```
FILE: script.js
```js
const NS = "http://www.w3.org/2000/svg";
let seed = 4711;

function rnd() {
  seed = (seed * 1664525 + 1013904223) % 4294967296;
  return seed / 4294967296;
}

function add(svg, name, attrs, text) {
  const el = document.createElementNS(NS, name);
  for (const k in attrs) el.setAttribute(k, attrs[k]);
  if (text !== undefined) el.textContent = text;
  svg.appendChild(el);
  return el;
}

function line(svg, x1, y1, x2, y2, cls) {
  add(svg, "path", { d: `M${x1} ${y1}L${x2} ${y2}`, class: cls });
}

function label(svg, x, y, text, anchor, cls) {
  add(svg, "text", { x: x, y: y, "text-anchor": anchor || "middle", class: cls || "" }, text);
}

// narrow band waterfall with its scales
function drawSpectrum() {
  const box = document.getElementById("spectrum");
  const W = box.clientWidth, H = box.clientHeight;
  const left = 34, top = 14, w = W - left - 23, h = H - top - 17;
  const cv = box.querySelector("canvas");
  cv.width = w;
  cv.height = h;
  const ctx = cv.getContext("2d");
  const img = ctx.createImageData(w, h);
  const carrier = Math.floor(w * 0.531);
  for (let y = 0; y < h; y++) {
    for (let x = 0; x < w; x++) {
      const boost = Math.exp(-Math.pow((x - 28) / 16, 2)) * 0.25;
      const v = -Math.log(rnd() + 1e-6) * (0.9 + boost);
      let c = [0, 0, 0];
      if (v > 4.9) c = [0, 190, 255];
      else if (v > 3.6) c = [10, 90, 255];
      else if (v > 0.6) c = [0, 0, Math.min(255, 20 + v * 80)];
      const on = Math.floor(y / 2) % 5;
      if (x >= carrier && x < carrier + 3) {
        const r = rnd();
        if (r < 0.45) c = [0, 230, 110];
        else if (r < 0.65) c = [200, 255, 0];
        else if (r < 0.85) c = [0, 210, 255];
      }
      const s1 = Math.abs(x - 376) < 1, s2 = Math.abs(x - 391) < 1;
      if ((s1 && (y < 28 || (y > 170 && y < 182) || (y > 270 && on < 1))) ||
          (s2 && (y < 24 || (y > 232 && y < 265) || (y > 54 && y < 480 && on < 1)))) {
        if (rnd() < 0.8) c = [0, 190, 240];
      }
      if ((x === 375 && y < 20) || (x === 392 && y < 22)) c = [0, 170, 230];
      img.data.set([c[0], c[1], c[2], 255], (y * w + x) * 4);
    }
  }
  ctx.putImageData(img, 0, 0);

  const svg = box.querySelector("svg");
  const defs = add(svg, "defs", {});
  const g = add(defs, "linearGradient", { id: "pal-bar", x1: 0, y1: 0, x2: 0, y2: 1 });
  [[0, "#ff0080"], [0.55, "#ff0060"], [0.7, "#ff1000"], [0.78, "#ff7000"], [0.86, "#ffff00"],
   [0.93, "#00f040"], [0.97, "#00e0ff"], [1, "#0020c0"]].forEach(s => add(g, "stop", { offset: s[0], "stop-color": s[1] }));
  add(svg, "rect", { x: 24, y: top, width: 10, height: h, fill: "#000" });
  add(svg, "rect", { x: 26, y: top, width: 4, height: h * 0.81, fill: "url(#pal-bar)" });
  for (let i = 0; i <= 30; i++) {
    const y = Math.round(top - 1 + i * h / 30);
    label(svg, 23, y + 4, i ? -i * 5 : "0", "end");
    line(svg, 23, y + 0.5, 26, y + 0.5, "tick");
  }
  for (let s = 0; s <= 34; s++) {
    const y = top + h - 1 - s * 20;
    label(svg, W - 1, y + 4, "-" + s + "s", "end");
  }
  const step = w * 0.16;
  ["8.39", "8.40", "8.41", "8.42", "8.43", "8.44"].forEach((t, i) => {
    const x = Math.round(left + w * 0.109 + i * step);
    line(svg, x + 0.5, top + h, x + 0.5, top + h + 3, "tick");
    label(svg, x, H - 3, t + " MHz");
  });
  add(svg, "rect", { x: left + w * 0.492, y: top + h, width: 9, height: 5, fill: "#8c8c94" });
  const fx = Math.round(left + w * 0.544) + 0.5;
  line(svg, fx, top, fx, top + h, "hot-line");
  label(svg, fx, 11, "8.417413 MHz", "middle", "hot");
}

// demodulated audio plot
function drawAudio() {
  const box = document.getElementById("audio");
  const svg = box.querySelector("svg");
  const W = box.clientWidth, H = box.clientHeight;
  const left = 25.5, top = 18, bottom = H - 16.5, right = W;
  add(svg, "rect", { x: W * 0.4963, y: top - 1, width: 37, height: bottom - top, class: "mark" });
  for (let i = 0; i <= 30; i++) {
    const y = Math.floor(top + i * (bottom - top) / 30) + 0.5;
    if (i < 30) line(svg, left, y, right, y, "grid");
    label(svg, 22, y + 3, i ? -i * 5 : "0", "end");
  }
  const step = W * 0.1568;
  for (let i = 0; i < 7; i++) {
    const x = Math.round(W * 0.0545 + i * step) + 0.5;
    line(svg, x, top, x, bottom, "grid");
    line(svg, x, bottom, x, bottom + 3, "tick");
    const last = i === 6;
    label(svg, last ? W : x, H - 3, (8.4 + i * 0.005).toFixed(3) + " MHz", last ? "end" : "middle");
  }
  const c = Math.round(W * 0.5096) + 0.5;
  line(svg, c, top, c, bottom, "mark-line");
  let d = "";
  for (let x = left; x < right; x += 1) {
    d += (d ? "L" : "M") + x + " " + (H * 0.866 + (rnd() + rnd() - 1) * 16).toFixed(1);
  }
  add(svg, "path", { d: d, class: "trace" });
  line(svg, left, bottom, right, bottom, "axis");
  line(svg, left, top, left, bottom, "hot-line");
  label(svg, left, 11, "8.398863 MHz [ -131 dBm]", "start", "hot");
}

// 0 - 30 MHz overview
const base = [[0, -100], [0.03, -117], [0.5, -118], [0.52, -110], [1.2, -110], [1.6, -116], [3.4, -119], [3.6, -115],
  [4, -112], [5, -110], [5.8, -109], [6.3, -107], [7.1, -110], [7.6, -108], [8.4, -108], [8.6, -104], [10, -104],
  [12, -107], [14, -106], [15, -101], [16, -106], [17, -105], [18, -101], [19.3, -94], [20, -97], [22, -100],
  [24, -99], [26, -103], [27, -101], [28, -104], [30, -105]];
const peaks = [[0, -94], [0.55, -88], [0.75, -88], [0.92, -92], [1.13, -84], [1.5, -95], [3.95, -73], [4.3, -92],
  [4.55, -86], [4.85, -92], [5.15, -97], [5.3, -82], [5.45, -97], [5.9, -72], [5.98, -60], [6.05, -70], [6.15, -82],
  [6.47, -90], [6.78, -94], [7.07, -94], [7.26, -66], [7.34, -72], [7.42, -65], [7.55, -90], [8.2, -98], [9.4, -78],
  [9.5, -75], [9.6, -80], [9.73, -71], [9.98, -84], [10.13, -86], [11.5, -72], [12.05, -90], [15.1, -86], [15.6, -94], [27.1, -93]];

function level(f) {
  let i = 1;
  while (i < base.length - 1 && base[i][0] < f) i++;
  const a = base[i - 1], b = base[i];
  let v = a[1] + (b[1] - a[1]) * (f - a[0]) / (b[0] - a[0]);
  v += (rnd() - 0.5) * 9;
  if (f > 0.5 && f < 1.25) v += rnd() * 20;
  else if ((f > 5.85 && f < 6.25) || (f > 7.2 && f < 7.5)) v += rnd() * 24;
  else if (f > 9.35 && f < 9.8) v += Math.pow(rnd(), 3) * 20;
  else if (f > 1.25 && f < 5.6 && (f < 1.6 || f > 3.5) && rnd() < 0.1) v += rnd() * 14;
  if (f > 5.9 && f < 6.2) v += 12;
  if (f > 7.22 && f < 7.46) v += 16;
  peaks.forEach(p => {
    if (Math.abs(p[0] - f) < 0.012) v = p[1];
  });
  return v;
}

function drawBand() {
  const box = document.getElementById("band");
  const svg = box.querySelector("svg");
  const W = box.clientWidth, H = box.clientHeight;
  const left = 25.5, top = 18, bottom = H - 16.5, w = W - left - 0.5;
  const k = 0.655;
  [0, -50, -100].forEach(v => {
    const y = Math.round(top - v * k) + 0.5;
    line(svg, left, y, W, y, "grid");
    label(svg, 22, y + 3, v, "end");
  });
  add(svg, "rect", { x: left + w * 0.276, y: top - 1, width: 17, height: bottom - top, class: "mark" });
  for (let i = 0; i <= 15; i++) {
    const x = Math.round(left - 0.5 + i * w / 15) + 0.5;
    if (i) line(svg, x, top - 1, x, bottom, "grid");
    line(svg, x, bottom, x, bottom + 3, "tick");
    label(svg, i === 15 ? W : x, H - 3, i * 2 + " MHz", i === 0 ? "start" : i === 15 ? "end" : "middle");
  }
  line(svg, left, top, left, bottom, "axis");
  line(svg, left, bottom, W, bottom, "axis");
  const m = Math.round(left + w * 0.2806) + 0.5;
  line(svg, m, top, m, bottom, "mark-line");
  let d = "";
  for (let x = 0; x <= w; x++) {
    d += (d ? "L" : "M") + (left + x) + " " + (top - level(x * 30 / w) * k).toFixed(1);
  }
  add(svg, "path", { d: d, class: "trace" });
  const fx = Math.round(left + w * 0.2094) + 0.5;
  line(svg, fx, top - 1, fx, bottom, "hot-line");
  label(svg, fx, 12, "6.282390 MHz [ -107 dBm]", "middle", "hot");
}

// audio FFT in the decoder window
function drawFft() {
  const box = document.getElementById("fft");
  const svg = box.querySelector("svg");
  const W = box.clientWidth, H = box.clientHeight;
  const left = 33.5, top = 2.5, bottom = H - 11.5, right = W - 4.5;
  const step = (right - left) / 10.62;
  const dy = (bottom - top) / 4;
  for (let x = left; x <= right + 1; x += step / 10) line(svg, Math.round(x) + 0.5, top, Math.round(x) + 0.5, bottom, "minor");
  for (let i = 0; i <= 4; i++) {
    const y = Math.round(top + i * dy - 0.5) + 0.5;
    line(svg, left, y, right, y, "minor");
    label(svg, left - 2, i === 0 ? y + 7 : i === 4 ? y - 2 : y + 3, "-" + i * 15 + "dB", "end");
  }
  for (let i = 0; i <= 10; i++) {
    const x = Math.round(left + i * step - 0.5) + 0.5;
    line(svg, x, top, x, bottom, "major");
    label(svg, i ? x + 1 : x + 4, H - 2, i * 250 + "Hz");
  }
  let d = "";
  for (let hz = 205; hz < 1200; hz += 6) {
    let v = 56 + rnd() * 6;
    if (hz > 250 && hz < 300) v = 60 - (hz - 250) * 0.4 + rnd() * 3;
    if (hz >= 300 && hz < 1095) v = 30 + rnd() * 11 + (hz < 350 ? 4 : 0);
    if (hz >= 1095 && hz < 1125) v = 38 + (hz - 1095) * 0.6;
    if (hz < 240) v = 58 + rnd() * 4;
    d += (d ? "L" : "M") + (left + hz * step / 250).toFixed(1) + " " + (top + Math.min(v, 60) * dy / 15).toFixed(1);
  }
  add(svg, "path", { d: d, class: "fft-trace" });
  const a = Math.round(left + 622 * step / 250), b = Math.round(left + 708 * step / 250), c = Math.round(left + 792 * step / 250);
  add(svg, "path", { d: `M${a} ${top + 36}V${top + 0.5}H${c}V${top + 36}`, "stroke-width": 2, class: "cursor" });
  add(svg, "path", { d: `M${b}.5 ${top}V${top + 53}`, "stroke-width": 3, class: "cursor" });
}

function drawFall() {
  const box = document.getElementById("fall");
  const cv = box.querySelector("canvas");
  const w = cv.width = box.clientWidth, h = cv.height = box.clientHeight;
  const ctx = cv.getContext("2d");
  const img = ctx.createImageData(w, h);
  const l = 58, r = 219;
  for (let y = 0; y < h; y++) {
    const reach = 20 + Math.pow(rnd(), 4) * 100;
    const reachL = 16 + Math.pow(rnd(), 3) * 110;
    const strong = rnd();
    for (let x = 0; x < w; x++) {
      let c = [240, 241, 243];
      if (x >= l && x < r) {
        const v = rnd();
        c = [225, 247, 124];
        if (v < 0.14) c = [178, 228, 160];
        else if (v < 0.34) c = [208, 243, 134];
        else if (v > 0.985) c = [255, 224, 84];
        else if (v > 0.68) c = [250, 252, 104];
        if (x < l + 2 || x > r - 3) c = rnd() < 0.6 ? [170, 224, 180] : c;
      } else {
        const dist = x < l ? l - x : x - r;
        const span = x < l ? reachL : reach;
        // noisy skirt, then a thin coloured streak further out
        let a = Math.exp(-dist / span * 1.3) * (0.15 + strong * 0.35 + rnd() * 0.4);
        if (dist < 3) a = 0.9;
        a = Math.min(1, a);
        if (a > 0.03) c = [240 - 78 * a, 241 - 13 * a, 243 - (dist < 3 ? 60 : 34) * a];
      }
      if (x === 124 || x === 157) c = [200, 92, 84];
      img.data.set([c[0], c[1], c[2], 255], (y * w + x) * 4);
    }
  }
  ctx.putImageData(img, 0, 0);
}

drawSpectrum();
drawAudio();
drawBand();
drawFft();
drawFall();
```
